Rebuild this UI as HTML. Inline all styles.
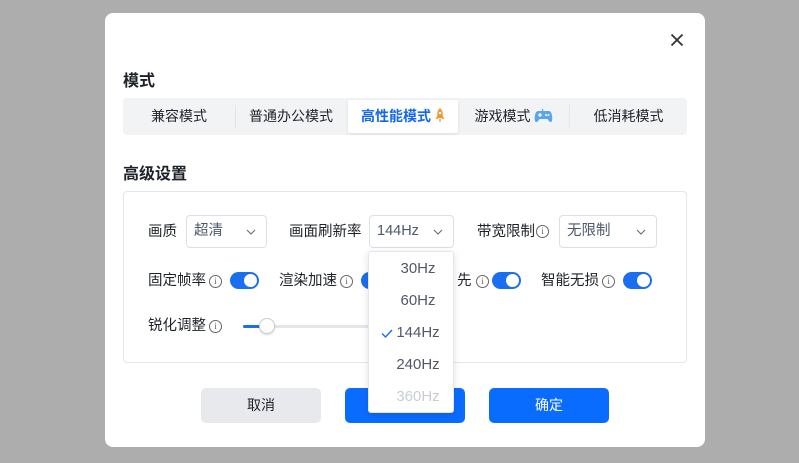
<!DOCTYPE html>
<html><head><meta charset="utf-8"><style>
*{margin:0;padding:0;box-sizing:border-box}
body{width:799px;height:463px;background:#adadad;font-family:"Liberation Sans","Noto Sans CJK SC",sans-serif;position:relative;overflow:hidden;color:#1d2129}
.a{position:absolute}
.dlg{left:105px;top:13px;width:600px;height:434px;background:#fff;border-radius:8px}
.t{font-size:16px;font-weight:bold;color:#1d2129}
.tabs{left:123px;top:98px;width:564px;height:37px;background:#f2f3f5;border-radius:4px}
.tab{top:0;height:37px;line-height:37px;text-align:center;font-size:14px;color:#1d2129}
.sep{top:7px;width:1px;height:23px;background:#e3e5e9}
.panel{left:123px;top:191px;width:564px;height:172px;border:1px solid #e5e6eb;border-radius:4px}
.lab{font-size:14.5px;line-height:18px;color:#1d2129}
.sel{height:33px;border:1px solid #dcdfe6;border-radius:4px;font-size:14.5px;line-height:31px;padding-left:7px;color:#4e5969}
.sel svg{position:absolute;right:10px;top:13px}
.info{width:13px;height:13px;border:1px solid #666;border-radius:50%;font-size:9px;line-height:11px;text-align:center;color:#666;font-family:"Liberation Serif",serif}
.tg{width:29px;height:17px;background:#1a6ff0;border-radius:9px}
.tg:after{content:"";position:absolute;right:2px;top:2px;width:13px;height:13px;background:#fff;border-radius:50%}
.btn{top:388px;width:120px;height:35px;border-radius:5px;font-size:14px;line-height:35px;text-align:center}
.dd{left:368px;top:251px;width:86px;height:162px;background:#fff;border:1px solid #e5e6eb;border-radius:3px;box-shadow:0 2px 8px rgba(0,0,0,.12)}
.it{left:0;width:84px;text-align:center;padding-left:14px;font-size:15px;color:#4e5969;height:32px;line-height:32px}
</style></head><body>
<div class="a dlg"></div>
<svg class="a" style="left:670px;top:33px" width="14" height="14" viewBox="0 0 14 14"><path d="M1.5 1.5L12.5 12.5M12.5 1.5L1.5 12.5" stroke="#333" stroke-width="1.8"/></svg>
<div class="a t" style="left:123px;top:67px">模式</div>
<div class="a tabs">
<div class="a tab" style="left:0;width:112px">兼容模式</div>
<div class="a sep" style="left:112px"></div>
<div class="a tab" style="left:112px;width:112px">普通办公模式</div>
<div class="a tab" style="left:225px;top:2px;width:110px;height:33px;line-height:33px;background:#fff;color:#1468f0;font-weight:bold;box-shadow:0 1px 3px rgba(0,0,0,.1);border-radius:2px">高性能模式 <svg width="10" height="15" viewBox="0 0 10 15" style="vertical-align:-2px"><path d="M5 0C8 3 8 6 7.5 10H2.5C2 6 2 3 5 0Z" fill="#f5922a"/><circle cx="5" cy="5" r="1.3" fill="#fff"/><path d="M2.5 8L0.5 11H2.8ZM7.5 8L9.5 11H7.2Z" fill="#f5922a"/><rect x="4.4" y="11" width="1.2" height="3" fill="#f5922a"/></svg></div>
<div class="a sep" style="left:446px"></div>
<div class="a tab" style="left:336px;width:110px">游戏模式 <svg width="19" height="14" viewBox="0 0 19 14" style="vertical-align:-2px"><path d="M4 2H15C17.5 2 19 8 18 12C17 14 15 13 13.5 10H5.5C4 13 2 14 1 12C0 8 1.5 2 4 2Z" fill="#5aa6ee"/><path d="M4 6H8M6 4V8" stroke="#fff" stroke-width="1.3"/><circle cx="12" cy="6" r="1" fill="#fff"/><circle cx="14.5" cy="6" r="1" fill="#fff"/><rect x="8" y="0" width="1.2" height="3" fill="#5aa6ee"/></svg></div>
<div class="a tab" style="left:447px;width:117px">低消耗模式</div>
</div>
<div class="a t" style="left:123px;top:160px">高级设置</div>
<div class="a panel"></div>
<div class="a lab" style="left:148px;top:223px">画质</div>
<div class="a sel" style="left:186px;top:215px;width:81px">超清<svg width="10" height="6"><path d="M1 1L5 5L9 1" stroke="#666" fill="none"/></svg></div>
<div class="a lab" style="left:289px;top:223px">画面刷新率</div>
<div class="a sel" style="left:369px;top:215px;width:85px">144Hz<svg width="10" height="6"><path d="M1 1L5 5L9 1" stroke="#666" fill="none"/></svg></div>
<div class="a lab" style="left:477px;top:223px">带宽限制</div>
<div class="a info" style="left:536px;top:225px">i</div>
<div class="a sel" style="left:559px;top:215px;width:98px">无限制<svg width="10" height="6"><path d="M1 1L5 5L9 1" stroke="#666" fill="none"/></svg></div>

<div class="a lab" style="left:148px;top:272px">固定帧率</div>
<div class="a info" style="left:209px;top:275px">i</div>
<div class="a tg" style="left:230px;top:272px"></div>
<div class="a lab" style="left:279px;top:272px">渲染加速</div>
<div class="a info" style="left:340px;top:275px">i</div>
<div class="a tg" style="left:361px;top:272px"></div>
<div class="a lab" style="left:457px;top:272px">先</div>
<div class="a info" style="left:476px;top:275px">i</div>
<div class="a tg" style="left:492px;top:272px"></div>
<div class="a lab" style="left:541px;top:272px">智能无损</div>
<div class="a info" style="left:602px;top:275px">i</div>
<div class="a tg" style="left:623px;top:272px"></div>

<div class="a lab" style="left:148px;top:317px">锐化调整</div>
<div class="a info" style="left:209px;top:320px">i</div>
<div class="a" style="left:243px;top:325px;width:130px;height:3px;background:#e5e6eb;border-radius:2px"></div>
<div class="a" style="left:243px;top:325px;width:24px;height:3px;background:#1a6ff0;border-radius:2px"></div>
<div class="a" style="left:259px;top:318px;width:16px;height:16px;background:#fff;border:1px solid #ccc;border-radius:50%;box-shadow:0 1px 2px rgba(0,0,0,.15)"></div>

<div class="a btn" style="left:201px;background:#e8e9ed;color:#1d2129">取消</div>
<div class="a btn" style="left:345px;background:#0a6cff"></div>
<div class="a btn" style="left:489px;background:#0a6cff;color:#fff">确定</div>

<div class="a dd">
<div class="a it" style="top:1px">30Hz</div>
<div class="a it" style="top:33px">60Hz</div>
<div class="a it" style="top:65px">144Hz</div>
<svg class="a" style="left:12px;top:77px" width="12" height="9"><path d="M1 4.5L4.5 8L11 1" stroke="#1a6ff0" stroke-width="1.4" fill="none"/></svg>
<div class="a it" style="top:97px">240Hz</div>
<div class="a it" style="top:129px;color:#c9cdd4">360Hz</div>
</div>
</body></html>
